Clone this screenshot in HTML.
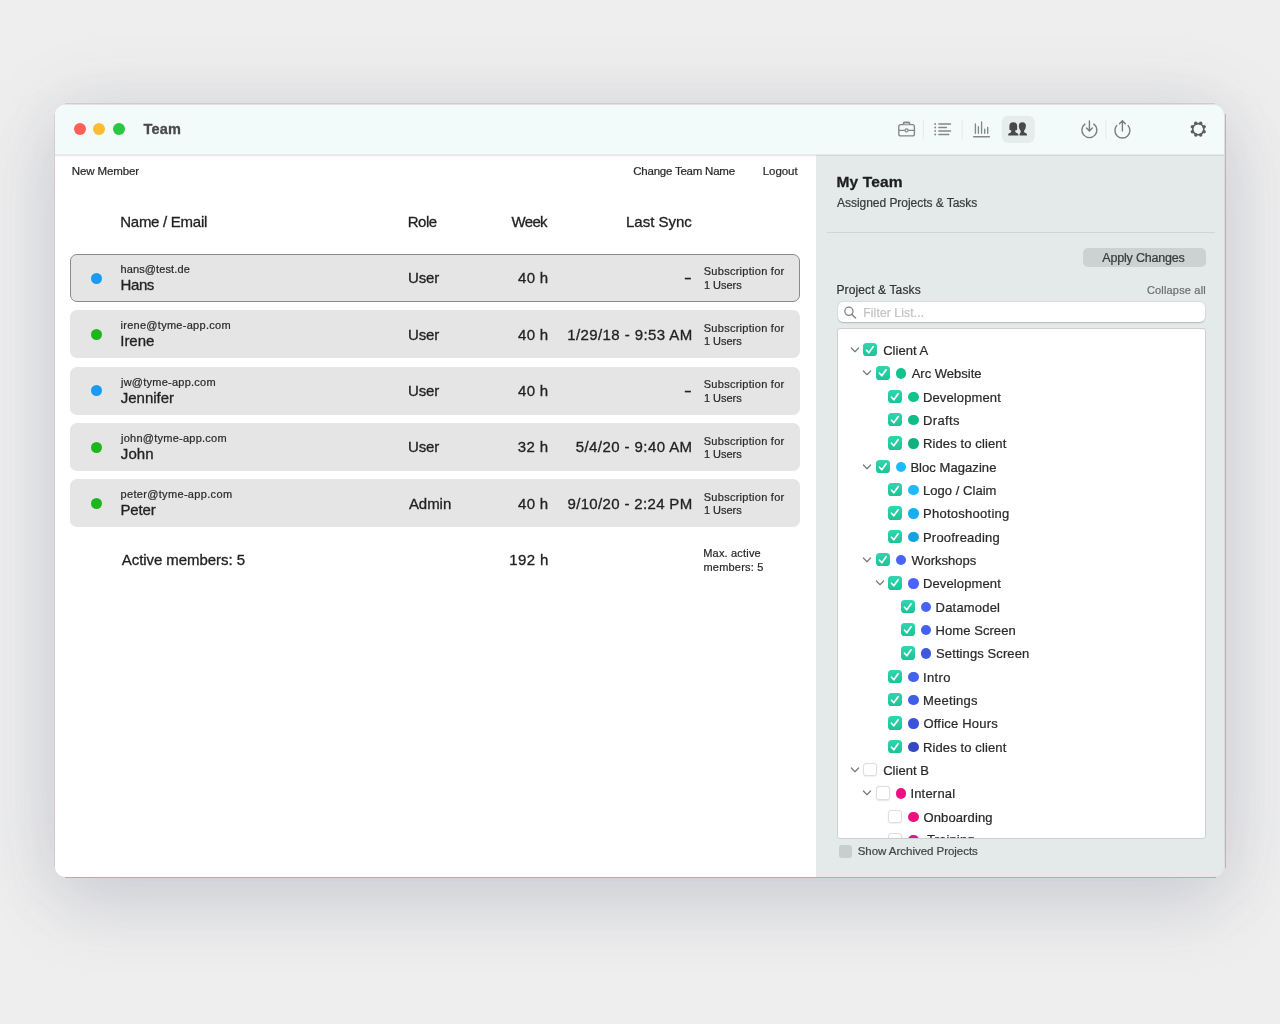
<!DOCTYPE html>
<html lang="en"><head><meta charset="utf-8"><title>Team</title>
<style>
*{margin:0;padding:0;box-sizing:border-box}
html,body{width:1280px;height:1024px;overflow:hidden}
body{background:#eeeeee;font-family:"Liberation Sans",sans-serif;color:#222;position:relative}
.abs{position:absolute}
.t{position:absolute;white-space:nowrap;line-height:1;-webkit-text-stroke:.22px currentColor}
.t.b{-webkit-text-stroke:.3px currentColor}
#page{position:absolute;left:0;top:0;width:1280px;height:1024px;will-change:transform;background:#eeeeee;overflow:hidden}
#shadow{position:absolute;left:56.5px;top:106px;width:1166.2px;height:769.3px;border-radius:9px;
 box-shadow:0 32px 72px 1.5px rgba(65,78,108,.12),0 2px 78px 2px rgba(65,78,108,.135)}
#win{position:absolute;left:55px;top:104.5px;width:1169.2px;height:772.3px;border-radius:10px;overflow:hidden}
#winbg{position:absolute;left:0;top:0;width:817px;height:100%;background:#fff}
.edge{position:absolute;background:#d9bcc2}
#titlebar{position:absolute;left:0;top:0;width:100%;height:49.4px;background:#f2fbfa}
#tbline{position:absolute;left:0;top:49.4px;width:100%;height:2.1px;background:#e8eaea}
#tbsh{position:absolute;left:0;top:51.5px;width:100%;height:2px;background:linear-gradient(rgba(0,0,0,.035),rgba(0,0,0,0))}
.tl{position:absolute;width:12px;height:12px;border-radius:50%}
.row{position:absolute;left:15px;width:730px;height:48px;border-radius:7px;background:#e5e5e5}
.row.sel{border:1.5px solid #8a8a8a}
.dot{position:absolute;border-radius:50%}
.cb{position:absolute;width:13.6px;height:13.6px;border-radius:3.6px}
.cb.on{background:linear-gradient(#30d6af,#1bc396)}
.cb.off{background:#fff;box-shadow:inset 0 0 0 1px #dedede,0 .5px 1.5px rgba(0,0,0,.10)}
.cb svg{display:block}
</style></head>
<body>
<div id="page">
<div id="shadow"></div>
<div class="edge" style="left:65px;top:103.3px;width:1150px;height:1.2px;opacity:.75"></div>
<div class="edge" style="left:53.9px;top:115px;width:1.1px;height:752px;opacity:.6"></div>
<div class="edge" style="left:1224.5px;top:114px;width:1.15px;height:753.5px;background:#cfaab0"></div>
<div class="edge" style="left:65px;top:876.8px;width:1151px;height:1.7px;background:#c4a5aa"></div>
<div id="win"><div id="winbg"></div>
<div id="titlebar"></div><div id="tbline"></div><div id="tbsh"></div>
<div class="tl" style="left:18.75px;top:18.75px;width:12px;height:12px;background:#ff5f57"></div>
<div class="tl" style="left:38.1px;top:18.75px;width:12px;height:12px;background:#febc2e"></div>
<div class="tl" style="left:57.5px;top:18.75px;width:12px;height:12px;background:#28c840"></div>
<div class="t b" id="t1" style="left:88.5px;top:17.5px;font-size:14.5px;color:#4a4a4a;font-weight:700;letter-spacing:0.17px;">Team</div>
<svg class="abs" style="left:835px;top:5.5px" width="330" height="40" viewBox="890 110 330 40" fill="none">
<!-- selected button background -->
<rect x="1001.7" y="115.8" width="33" height="27.1" rx="6.5" fill="#e5edec"/>
<!-- separators -->
<g stroke="#e4eaea" stroke-width="1"><path d="M923.4 119.5V139"/><path d="M962.2 119.5V139"/><path d="M1105.9 119.5V139"/></g>
<!-- briefcase -->
<g stroke="#868686" stroke-width="1.35" stroke-linejoin="round">
<rect x="898.8" y="124.6" width="15.6" height="11.3" rx="1.9"/>
<path d="M903.5 124.4V123.6Q903.5 122.3 904.8 122.3H908.4Q909.7 122.3 909.7 123.6V124.4" stroke-width="1.5" fill="#c4c8c8"/>
<path d="M898.8 130.4H905.1M908.1 130.4H914.4"/>
<circle cx="906.6" cy="130.4" r="1.5" stroke-width="1.2"/>
</g>
<!-- list -->
<g stroke="#868686" stroke-width="1.45" stroke-linecap="round">
<path d="M938.9 124H950.5M938.9 127.5H946.4M938.9 130.9H950.5M938.9 134.5H948.7"/>
</g>
<g fill="#868686"><circle cx="935.2" cy="124" r="0.95"/><circle cx="935.2" cy="127.5" r="0.95"/><circle cx="935.2" cy="130.9" r="0.95"/><circle cx="935.2" cy="134.5" r="0.95"/></g>
<!-- bar chart -->
<g stroke="#868686" stroke-width="1.35" stroke-linecap="round">
<path d="M975.4 123.9V133.2M978.4 126.6V133.2M981.6 122V133.2M984.7 129.2V133.2M987.7 127.3V133.2"/>
<path d="M973.7 136.7H989.4" stroke-width="1.5"/>
</g>
<!-- people -->
<g fill="#484848">
<path d="M1013.3 122.3C1015.9 122.3 1017.2 123.9 1017.2 126.2V128.8C1017.2 129.8 1016.6 130.3 1015.8 130.3H1015.3V131.5C1015.3 132.1 1015.6 132.4 1016.2 132.65L1017.4 133.15C1018.1 133.45 1018.35 134 1018.35 134.8V135.6H1008.15V134.8C1008.15 134 1008.4 133.45 1009.1 133.15L1010.3 132.65C1010.9 132.4 1011.2 132.1 1011.2 131.5V130.3H1010.8C1010 130.3 1009.4 129.8 1009.4 128.8V126.2C1009.4 123.9 1010.7 122.3 1013.3 122.3Z"/>
<path d="M1022.3 122.3C1024.7 122.3 1025.9 123.8 1025.9 125.8C1025.9 128 1025.1 129.8 1024.05 130.8V131.5C1024.05 132.1 1024.4 132.4 1025 132.65L1026.05 133.15C1026.75 133.45 1027 134 1027 134.8V135.6H1019.55V134.8C1019.55 133.9 1019.75 133.35 1020.2 133L1020.65 132.6V130.8C1019.6 129.8 1018.85 128 1018.85 125.8C1018.85 123.8 1019.9 122.3 1022.3 122.3Z"/>
</g>
<!-- download -->
<g stroke="#7c7c7c" stroke-width="1.4" stroke-linecap="round" stroke-linejoin="round">
<path d="M1084.9 124.1A7.5 7.5 0 1 0 1093.9 124.1"/>
<path d="M1089.4 120.9V130.6M1086.5 128L1089.4 130.9L1092.3 128"/>
</g>
<!-- upload -->
<g stroke="#7c7c7c" stroke-width="1.4" stroke-linecap="round" stroke-linejoin="round">
<path d="M1116.7 125.6A7.5 7.5 0 1 0 1128.1 125.6"/>
<path d="M1122.4 120.7V131M1119.5 123.7L1122.4 120.7L1125.3 123.7"/>
</g>
<!-- gear -->
<g>
<circle cx="1198.25" cy="129.2" r="5.55" stroke="#5e5e5e" stroke-width="1.6"/>
<g fill="#5e5e5e"><circle cx="1204.12" cy="131.63" r="1.75"/><circle cx="1200.68" cy="135.07" r="1.75"/><circle cx="1195.82" cy="135.07" r="1.75"/><circle cx="1192.38" cy="131.63" r="1.75"/><circle cx="1192.38" cy="126.77" r="1.75"/><circle cx="1195.82" cy="123.33" r="1.75"/><circle cx="1200.68" cy="123.33" r="1.75"/><circle cx="1204.12" cy="126.77" r="1.75"/></g>
</g>
</svg>

<div class="t" id="t2" style="left:16.75px;top:61.5px;font-size:11.5px;color:#2a2a2a;letter-spacing:-0.11px;">New Member</div>
<div class="t" id="t3" style="left:578.25px;top:61.5px;font-size:11.5px;color:#2a2a2a;letter-spacing:-0.23px;">Change Team Name</div>
<div class="t" id="t4" style="left:707.8px;top:61.5px;font-size:11.5px;color:#2a2a2a;letter-spacing:-0.07px;">Logout</div>
<div class="t b" id="t5" style="left:65.25px;top:109.5px;font-size:15px;color:#222;letter-spacing:-0.27px;">Name / Email</div>
<div class="t b" id="t6" style="left:352.75px;top:109.5px;font-size:15px;color:#222;letter-spacing:-0.5px;">Role</div>
<div class="t b" id="t7" style="left:456.5px;top:109.5px;font-size:15px;color:#222;letter-spacing:-0.67px;">Week</div>
<div class="t b" id="t8" style="left:571px;top:109.5px;font-size:15px;color:#222;">Last Sync</div>
<div class="row sel" style="left:15px;top:149.3px;width:730px;height:48px;"></div>
<div class="dot" style="left:35.75px;top:168.05px;width:11px;height:11px;background:#1a9af3"></div>
<div class="t" id="t9" style="left:65.5px;top:159.5px;font-size:11px;color:#2a2a2a;letter-spacing:0.11px;">hans@test.de</div>
<div class="t b" id="t10" style="left:65.5px;top:172.5px;font-size:15px;color:#222;letter-spacing:-0.39px;">Hans</div>
<div class="t b" id="t11" style="left:352.9px;top:165.5px;font-size:15px;color:#222;letter-spacing:-0.08px;">User</div>
<div class="t b" id="t12" style="left:463px;top:165.5px;font-size:15px;color:#222;letter-spacing:0.33px;">40 h</div>
<div class="t b" id="t13" style="left:629.1px;top:165.5px;font-size:15px;color:#222;transform:scaleX(1.55);transform-origin:0 0;">-</div>
<div class="t" id="t14" style="left:648.75px;top:161.5px;font-size:11px;color:#2a2a2a;letter-spacing:0.27px;">Subscription for</div>
<div class="t" id="t15" style="left:648.95px;top:175.5px;font-size:11px;color:#2a2a2a;letter-spacing:-0.03px;">1 Users</div>
<div class="row" style="left:15px;top:205.7px;width:730px;height:48px;"></div>
<div class="dot" style="left:35.75px;top:224.45px;width:11px;height:11px;background:#1db71d"></div>
<div class="t" id="t16" style="left:65.5px;top:215.5px;font-size:11px;color:#2a2a2a;letter-spacing:0.28px;">irene@tyme-app.com</div>
<div class="t b" id="t17" style="left:65.25px;top:228.5px;font-size:15px;color:#222;letter-spacing:-0.04px;">Irene</div>
<div class="t b" id="t18" style="left:352.9px;top:222.5px;font-size:15px;color:#222;letter-spacing:-0.08px;">User</div>
<div class="t b" id="t19" style="left:463px;top:222.5px;font-size:15px;color:#222;letter-spacing:0.33px;">40 h</div>
<div class="t b" id="t20" style="left:512.2px;top:222.5px;font-size:15px;color:#222;letter-spacing:0.41px;">1/29/18 - 9:53 AM</div>
<div class="t" id="t21" style="left:648.75px;top:218.5px;font-size:11px;color:#2a2a2a;letter-spacing:0.27px;">Subscription for</div>
<div class="t" id="t22" style="left:648.95px;top:231.5px;font-size:11px;color:#2a2a2a;letter-spacing:-0.03px;">1 Users</div>
<div class="row" style="left:15px;top:262.1px;width:730px;height:48px;"></div>
<div class="dot" style="left:35.75px;top:280.85px;width:11px;height:11px;background:#1a9af3"></div>
<div class="t" id="t23" style="left:66px;top:272.5px;font-size:11px;color:#2a2a2a;letter-spacing:0.24px;">jw@tyme-app.com</div>
<div class="t b" id="t24" style="left:65.75px;top:285.5px;font-size:15px;color:#222;">Jennifer</div>
<div class="t b" id="t25" style="left:352.9px;top:278.5px;font-size:15px;color:#222;letter-spacing:-0.08px;">User</div>
<div class="t b" id="t26" style="left:463px;top:278.5px;font-size:15px;color:#222;letter-spacing:0.33px;">40 h</div>
<div class="t b" id="t27" style="left:629.1px;top:278.5px;font-size:15px;color:#222;transform:scaleX(1.55);transform-origin:0 0;">-</div>
<div class="t" id="t28" style="left:648.75px;top:274.5px;font-size:11px;color:#2a2a2a;letter-spacing:0.27px;">Subscription for</div>
<div class="t" id="t29" style="left:648.95px;top:288.5px;font-size:11px;color:#2a2a2a;letter-spacing:-0.03px;">1 Users</div>
<div class="row" style="left:15px;top:318.5px;width:730px;height:48px;"></div>
<div class="dot" style="left:35.75px;top:337.25px;width:11px;height:11px;background:#1db71d"></div>
<div class="t" id="t30" style="left:66px;top:328.5px;font-size:11px;color:#2a2a2a;letter-spacing:0.25px;">john@tyme-app.com</div>
<div class="t b" id="t31" style="left:65.75px;top:341.5px;font-size:15px;color:#222;letter-spacing:0.13px;">John</div>
<div class="t b" id="t32" style="left:352.9px;top:334.5px;font-size:15px;color:#222;letter-spacing:-0.08px;">User</div>
<div class="t b" id="t33" style="left:462.75px;top:334.5px;font-size:15px;color:#222;letter-spacing:0.42px;">32 h</div>
<div class="t b" id="t34" style="left:520.75px;top:334.5px;font-size:15px;color:#222;letter-spacing:0.42px;">5/4/20 - 9:40 AM</div>
<div class="t" id="t35" style="left:648.75px;top:331.5px;font-size:11px;color:#2a2a2a;letter-spacing:0.27px;">Subscription for</div>
<div class="t" id="t36" style="left:648.95px;top:344.5px;font-size:11px;color:#2a2a2a;letter-spacing:-0.03px;">1 Users</div>
<div class="row" style="left:15px;top:374.9px;width:730px;height:48px;"></div>
<div class="dot" style="left:35.75px;top:393.65px;width:11px;height:11px;background:#1db71d"></div>
<div class="t" id="t37" style="left:65.5px;top:384.5px;font-size:11px;color:#2a2a2a;letter-spacing:0.33px;">peter@tyme-app.com</div>
<div class="t b" id="t38" style="left:65.5px;top:397.5px;font-size:15px;color:#222;letter-spacing:-0.17px;">Peter</div>
<div class="t b" id="t39" style="left:353.9px;top:391.5px;font-size:15px;color:#222;letter-spacing:-0.04px;">Admin</div>
<div class="t b" id="t40" style="left:463px;top:391.5px;font-size:15px;color:#222;letter-spacing:0.33px;">40 h</div>
<div class="t b" id="t41" style="left:512.5px;top:391.5px;font-size:15px;color:#222;letter-spacing:0.34px;">9/10/20 - 2:24 PM</div>
<div class="t" id="t42" style="left:648.75px;top:387.5px;font-size:11px;color:#2a2a2a;letter-spacing:0.27px;">Subscription for</div>
<div class="t" id="t43" style="left:648.95px;top:400.5px;font-size:11px;color:#2a2a2a;letter-spacing:-0.03px;">1 Users</div>
<div class="t b" id="t44" style="left:66.75px;top:447.5px;font-size:15px;color:#222;letter-spacing:-0.06px;">Active members: 5</div>
<div class="t b" id="t45" style="left:454.35px;top:447.5px;font-size:15px;color:#222;letter-spacing:0.36px;">192 h</div>
<div class="t" id="t46" style="left:648.25px;top:443.5px;font-size:11px;color:#2a2a2a;letter-spacing:0.18px;">Max. active</div>
<div class="t" id="t47" style="left:648.5px;top:457.5px;font-size:11px;color:#2a2a2a;letter-spacing:0.19px;">members: 5</div>
<div class="abs" style="left:760.9px;top:50.1px;width:409px;height:724px;background:#e4eae9;border-top:1.6px solid #d2d7d7"></div>
<div class="t b" id="t48" style="left:781.4px;top:69.5px;font-size:15.5px;color:#1e1e1e;font-weight:700;letter-spacing:0.16px;">My Team</div>
<div class="t" id="t49" style="left:782.05px;top:92.5px;font-size:12px;color:#3a3a3a;letter-spacing:-0.04px;">Assigned Projects &amp; Tasks</div>
<div class="abs" style="left:771.9px;top:127.5px;width:388.5px;height:1.2px;background:#d0d6d6"></div>
<div class="abs" style="left:1027.5px;top:143.3px;width:123px;height:19.1px;border-radius:5px;background:#ccd1d1"></div>
<div class="t" id="t50" style="left:1047.35px;top:147.5px;font-size:12.5px;color:#3a3a3a;letter-spacing:-0.2px;">Apply Changes</div>
<div class="t" id="t51" style="left:781.4px;top:179.5px;font-size:12px;color:#333;letter-spacing:0.13px;">Project &amp; Tasks</div>
<div class="t" id="t52" style="left:1091.9px;top:180.5px;font-size:11px;color:#6e6e6e;letter-spacing:0.18px;">Collapse all</div>
<div class="abs" style="left:782.5px;top:197.8px;width:367px;height:19.3px;border-radius:5px;background:#fff;box-shadow:0 .6px 1.4px rgba(0,0,0,.2),0 0 0 .5px rgba(0,0,0,.03)"></div>
<svg class="abs" style="left:788px;top:200.5px" width="15" height="15" viewBox="0 0 15 15"><circle cx="5.9" cy="6.3" r="4.1" fill="none" stroke="#808080" stroke-width="1.25"/><path d="M8.9 9.4 L12.6 13.1" stroke="#808080" stroke-width="1.35" stroke-linecap="round"/></svg>
<div class="t" id="t53" style="left:808.25px;top:202.5px;font-size:12px;color:#c2c2c2;letter-spacing:0.16px;">Filter List...</div>
<div class="abs" id="tree" style="left:781.7px;top:223.4px;width:369.2px;height:511.6px;background:#fff;border:1.3px solid #ccd0d0;border-radius:3px;overflow:hidden">
<svg class="abs" style="left:12.1px;top:17.2px" width="10" height="8" viewBox="0 0 10 8"><path d="M1.4 2.0 L5 5.7 L8.6 2.0" fill="none" stroke="#7c7c7c" stroke-width="1.25" stroke-linecap="round" stroke-linejoin="round"/></svg>
<div class="cb on" style="left:25.7px;top:14px;width:13.6px;height:13.6px;"><svg width="13.6" height="13.6" viewBox="0 0 13.6 13.6"><path d="M3.5 7.2 L5.8 9.8 L10.1 3.8" fill="none" stroke="#fff" stroke-width="1.7" stroke-linecap="round" stroke-linejoin="round"/></svg></div>
<div class="t" id="t54" style="left:45.45px;top:14.8px;font-size:13px;color:#2a2a2a;letter-spacing:0.04px;">Client A</div>
<svg class="abs" style="left:24.65px;top:40.53px" width="10" height="8" viewBox="0 0 10 8"><path d="M1.4 2.0 L5 5.7 L8.6 2.0" fill="none" stroke="#7c7c7c" stroke-width="1.25" stroke-linecap="round" stroke-linejoin="round"/></svg>
<div class="cb on" style="left:38.25px;top:37.33px;width:13.6px;height:13.6px;"><svg width="13.6" height="13.6" viewBox="0 0 13.6 13.6"><path d="M3.5 7.2 L5.8 9.8 L10.1 3.8" fill="none" stroke="#fff" stroke-width="1.7" stroke-linecap="round" stroke-linejoin="round"/></svg></div>
<div class="dot" style="left:58.25px;top:39.53px;width:10.4px;height:10.4px;background:#12c48c"></div>
<div class="t" id="t55" style="left:73.95px;top:37.8px;font-size:13px;color:#2a2a2a;letter-spacing:0.01px;">Arc Website</div>
<div class="cb on" style="left:50.8px;top:60.67px;width:13.6px;height:13.6px;"><svg width="13.6" height="13.6" viewBox="0 0 13.6 13.6"><path d="M3.5 7.2 L5.8 9.8 L10.1 3.8" fill="none" stroke="#fff" stroke-width="1.7" stroke-linecap="round" stroke-linejoin="round"/></svg></div>
<div class="dot" style="left:70.8px;top:62.87px;width:10.4px;height:10.4px;background:#12c48c"></div>
<div class="t" id="t56" style="left:85.3px;top:61.8px;font-size:13px;color:#2a2a2a;letter-spacing:0.12px;">Development</div>
<div class="cb on" style="left:50.8px;top:84px;width:13.6px;height:13.6px;"><svg width="13.6" height="13.6" viewBox="0 0 13.6 13.6"><path d="M3.5 7.2 L5.8 9.8 L10.1 3.8" fill="none" stroke="#fff" stroke-width="1.7" stroke-linecap="round" stroke-linejoin="round"/></svg></div>
<div class="dot" style="left:70.8px;top:86.2px;width:10.4px;height:10.4px;background:#10bb85"></div>
<div class="t" id="t57" style="left:85.3px;top:84.8px;font-size:13px;color:#2a2a2a;letter-spacing:0.36px;">Drafts</div>
<div class="cb on" style="left:50.8px;top:107.33px;width:13.6px;height:13.6px;"><svg width="13.6" height="13.6" viewBox="0 0 13.6 13.6"><path d="M3.5 7.2 L5.8 9.8 L10.1 3.8" fill="none" stroke="#fff" stroke-width="1.7" stroke-linecap="round" stroke-linejoin="round"/></svg></div>
<div class="dot" style="left:70.8px;top:109.53px;width:10.4px;height:10.4px;background:#0fb17e"></div>
<div class="t" id="t58" style="left:85.3px;top:107.8px;font-size:13px;color:#2a2a2a;letter-spacing:0.12px;">Rides to client</div>
<svg class="abs" style="left:24.65px;top:133.86px" width="10" height="8" viewBox="0 0 10 8"><path d="M1.4 2.0 L5 5.7 L8.6 2.0" fill="none" stroke="#7c7c7c" stroke-width="1.25" stroke-linecap="round" stroke-linejoin="round"/></svg>
<div class="cb on" style="left:38.25px;top:130.66px;width:13.6px;height:13.6px;"><svg width="13.6" height="13.6" viewBox="0 0 13.6 13.6"><path d="M3.5 7.2 L5.8 9.8 L10.1 3.8" fill="none" stroke="#fff" stroke-width="1.7" stroke-linecap="round" stroke-linejoin="round"/></svg></div>
<div class="dot" style="left:58.25px;top:132.87px;width:10.4px;height:10.4px;background:#1cbaff"></div>
<div class="t" id="t59" style="left:72.7px;top:131.8px;font-size:13px;color:#2a2a2a;letter-spacing:0.06px;">Bloc Magazine</div>
<div class="cb on" style="left:50.8px;top:154px;width:13.6px;height:13.6px;"><svg width="13.6" height="13.6" viewBox="0 0 13.6 13.6"><path d="M3.5 7.2 L5.8 9.8 L10.1 3.8" fill="none" stroke="#fff" stroke-width="1.7" stroke-linecap="round" stroke-linejoin="round"/></svg></div>
<div class="dot" style="left:70.8px;top:156.2px;width:10.4px;height:10.4px;background:#1cbaff"></div>
<div class="t" id="t60" style="left:85.3px;top:154.8px;font-size:13px;color:#2a2a2a;letter-spacing:0.04px;">Logo / Claim</div>
<div class="cb on" style="left:50.8px;top:177.33px;width:13.6px;height:13.6px;"><svg width="13.6" height="13.6" viewBox="0 0 13.6 13.6"><path d="M3.5 7.2 L5.8 9.8 L10.1 3.8" fill="none" stroke="#fff" stroke-width="1.7" stroke-linecap="round" stroke-linejoin="round"/></svg></div>
<div class="dot" style="left:70.8px;top:179.53px;width:10.4px;height:10.4px;background:#16aff4"></div>
<div class="t" id="t61" style="left:85.3px;top:177.8px;font-size:13px;color:#2a2a2a;letter-spacing:0.27px;">Photoshooting</div>
<div class="cb on" style="left:50.8px;top:200.66px;width:13.6px;height:13.6px;"><svg width="13.6" height="13.6" viewBox="0 0 13.6 13.6"><path d="M3.5 7.2 L5.8 9.8 L10.1 3.8" fill="none" stroke="#fff" stroke-width="1.7" stroke-linecap="round" stroke-linejoin="round"/></svg></div>
<div class="dot" style="left:70.8px;top:202.86px;width:10.4px;height:10.4px;background:#13a1e0"></div>
<div class="t" id="t62" style="left:85.3px;top:201.8px;font-size:13px;color:#2a2a2a;letter-spacing:0.21px;">Proofreading</div>
<svg class="abs" style="left:24.65px;top:227.2px" width="10" height="8" viewBox="0 0 10 8"><path d="M1.4 2.0 L5 5.7 L8.6 2.0" fill="none" stroke="#7c7c7c" stroke-width="1.25" stroke-linecap="round" stroke-linejoin="round"/></svg>
<div class="cb on" style="left:38.25px;top:224px;width:13.6px;height:13.6px;"><svg width="13.6" height="13.6" viewBox="0 0 13.6 13.6"><path d="M3.5 7.2 L5.8 9.8 L10.1 3.8" fill="none" stroke="#fff" stroke-width="1.7" stroke-linecap="round" stroke-linejoin="round"/></svg></div>
<div class="dot" style="left:58.25px;top:226.2px;width:10.4px;height:10.4px;background:#4a64fd"></div>
<div class="t" id="t63" style="left:73.7px;top:224.8px;font-size:13px;color:#2a2a2a;letter-spacing:0.01px;">Workshops</div>
<svg class="abs" style="left:37.2px;top:250.53px" width="10" height="8" viewBox="0 0 10 8"><path d="M1.4 2.0 L5 5.7 L8.6 2.0" fill="none" stroke="#7c7c7c" stroke-width="1.25" stroke-linecap="round" stroke-linejoin="round"/></svg>
<div class="cb on" style="left:50.8px;top:247.33px;width:13.6px;height:13.6px;"><svg width="13.6" height="13.6" viewBox="0 0 13.6 13.6"><path d="M3.5 7.2 L5.8 9.8 L10.1 3.8" fill="none" stroke="#fff" stroke-width="1.7" stroke-linecap="round" stroke-linejoin="round"/></svg></div>
<div class="dot" style="left:70.8px;top:249.53px;width:10.4px;height:10.4px;background:#4a64fd"></div>
<div class="t" id="t64" style="left:85.3px;top:247.8px;font-size:13px;color:#2a2a2a;letter-spacing:0.12px;">Development</div>
<div class="cb on" style="left:63.35px;top:270.66px;width:13.6px;height:13.6px;"><svg width="13.6" height="13.6" viewBox="0 0 13.6 13.6"><path d="M3.5 7.2 L5.8 9.8 L10.1 3.8" fill="none" stroke="#fff" stroke-width="1.7" stroke-linecap="round" stroke-linejoin="round"/></svg></div>
<div class="dot" style="left:83.35px;top:272.86px;width:10.4px;height:10.4px;background:#4763f8"></div>
<div class="t" id="t65" style="left:97.9px;top:271.8px;font-size:13px;color:#2a2a2a;letter-spacing:0.19px;">Datamodel</div>
<div class="cb on" style="left:63.35px;top:294px;width:13.6px;height:13.6px;"><svg width="13.6" height="13.6" viewBox="0 0 13.6 13.6"><path d="M3.5 7.2 L5.8 9.8 L10.1 3.8" fill="none" stroke="#fff" stroke-width="1.7" stroke-linecap="round" stroke-linejoin="round"/></svg></div>
<div class="dot" style="left:83.35px;top:296.2px;width:10.4px;height:10.4px;background:#4360ee"></div>
<div class="t" id="t66" style="left:97.9px;top:294.8px;font-size:13px;color:#2a2a2a;letter-spacing:0.06px;">Home Screen</div>
<div class="cb on" style="left:63.35px;top:317.33px;width:13.6px;height:13.6px;"><svg width="13.6" height="13.6" viewBox="0 0 13.6 13.6"><path d="M3.5 7.2 L5.8 9.8 L10.1 3.8" fill="none" stroke="#fff" stroke-width="1.7" stroke-linecap="round" stroke-linejoin="round"/></svg></div>
<div class="dot" style="left:83.35px;top:319.53px;width:10.4px;height:10.4px;background:#3f59e0"></div>
<div class="t" id="t67" style="left:98.4px;top:317.8px;font-size:13px;color:#2a2a2a;letter-spacing:0.1px;">Settings Screen</div>
<div class="cb on" style="left:50.8px;top:340.66px;width:13.6px;height:13.6px;"><svg width="13.6" height="13.6" viewBox="0 0 13.6 13.6"><path d="M3.5 7.2 L5.8 9.8 L10.1 3.8" fill="none" stroke="#fff" stroke-width="1.7" stroke-linecap="round" stroke-linejoin="round"/></svg></div>
<div class="dot" style="left:70.8px;top:342.86px;width:10.4px;height:10.4px;background:#4461f0"></div>
<div class="t" id="t68" style="left:85.3px;top:341.8px;font-size:13px;color:#2a2a2a;letter-spacing:0.39px;">Intro</div>
<div class="cb on" style="left:50.8px;top:364px;width:13.6px;height:13.6px;"><svg width="13.6" height="13.6" viewBox="0 0 13.6 13.6"><path d="M3.5 7.2 L5.8 9.8 L10.1 3.8" fill="none" stroke="#fff" stroke-width="1.7" stroke-linecap="round" stroke-linejoin="round"/></svg></div>
<div class="dot" style="left:70.8px;top:366.19px;width:10.4px;height:10.4px;background:#415de8"></div>
<div class="t" id="t69" style="left:85.3px;top:364.8px;font-size:13px;color:#2a2a2a;letter-spacing:0.27px;">Meetings</div>
<div class="cb on" style="left:50.8px;top:387.33px;width:13.6px;height:13.6px;"><svg width="13.6" height="13.6" viewBox="0 0 13.6 13.6"><path d="M3.5 7.2 L5.8 9.8 L10.1 3.8" fill="none" stroke="#fff" stroke-width="1.7" stroke-linecap="round" stroke-linejoin="round"/></svg></div>
<div class="dot" style="left:70.8px;top:389.53px;width:10.4px;height:10.4px;background:#3b53d6"></div>
<div class="t" id="t70" style="left:85.8px;top:387.8px;font-size:13px;color:#2a2a2a;letter-spacing:0.2px;">Office Hours</div>
<div class="cb on" style="left:50.8px;top:410.66px;width:13.6px;height:13.6px;"><svg width="13.6" height="13.6" viewBox="0 0 13.6 13.6"><path d="M3.5 7.2 L5.8 9.8 L10.1 3.8" fill="none" stroke="#fff" stroke-width="1.7" stroke-linecap="round" stroke-linejoin="round"/></svg></div>
<div class="dot" style="left:70.8px;top:412.86px;width:10.4px;height:10.4px;background:#3649c5"></div>
<div class="t" id="t71" style="left:85.3px;top:411.8px;font-size:13px;color:#2a2a2a;letter-spacing:0.12px;">Rides to client</div>
<svg class="abs" style="left:12.1px;top:437.19px" width="10" height="8" viewBox="0 0 10 8"><path d="M1.4 2.0 L5 5.7 L8.6 2.0" fill="none" stroke="#7c7c7c" stroke-width="1.25" stroke-linecap="round" stroke-linejoin="round"/></svg>
<div class="cb off" style="left:25.7px;top:433.99px;width:13.6px;height:13.6px;"></div>
<div class="t" id="t72" style="left:45.45px;top:434.8px;font-size:13px;color:#2a2a2a;letter-spacing:0.03px;">Client B</div>
<svg class="abs" style="left:24.65px;top:460.53px" width="10" height="8" viewBox="0 0 10 8"><path d="M1.4 2.0 L5 5.7 L8.6 2.0" fill="none" stroke="#7c7c7c" stroke-width="1.25" stroke-linecap="round" stroke-linejoin="round"/></svg>
<div class="cb off" style="left:38.25px;top:457.33px;width:13.6px;height:13.6px;"></div>
<div class="dot" style="left:58.25px;top:459.53px;width:10.4px;height:10.4px;background:#ee1080"></div>
<div class="t" id="t73" style="left:72.7px;top:457.8px;font-size:13px;color:#2a2a2a;letter-spacing:0.2px;">Internal</div>
<div class="cb off" style="left:50.8px;top:480.66px;width:13.6px;height:13.6px;"></div>
<div class="dot" style="left:70.8px;top:482.86px;width:10.4px;height:10.4px;background:#ee1080"></div>
<div class="t" id="t74" style="left:85.8px;top:481.8px;font-size:13px;color:#2a2a2a;letter-spacing:0.12px;">Onboarding</div>
<div class="cb off" style="left:50.8px;top:503.99px;width:13.6px;height:13.6px;"></div>
<div class="dot" style="left:70.8px;top:506.19px;width:10.4px;height:10.4px;background:#ee1080"></div>
<div class="t" id="t75" style="left:89.3px;top:503.8px;font-size:13px;color:#2a2a2a;letter-spacing:0.15px;">Training</div>
</div>
<div class="abs" style="left:783.6px;top:740.3px;width:13.3px;height:13px;border-radius:3px;background:#c8cece"></div>
<div class="t" id="t76" style="left:802.7px;top:741.5px;font-size:11.5px;color:#444;letter-spacing:-0.03px;">Show Archived Projects</div>
</div>
</div>
</body></html>
